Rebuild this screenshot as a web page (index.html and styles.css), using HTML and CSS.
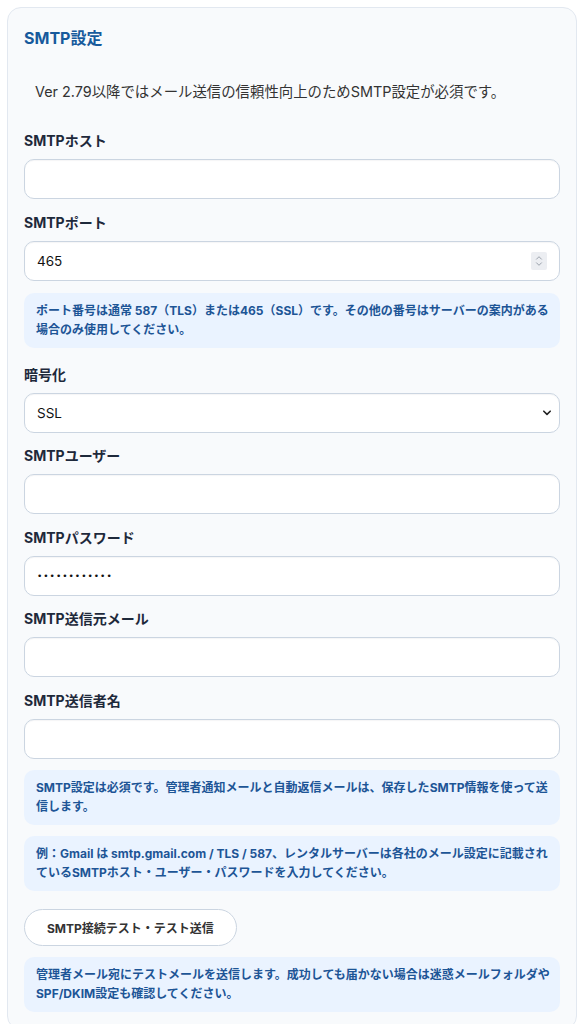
FILE: index.html
```html
<!DOCTYPE html>
<html lang="ja">
<head>
<meta charset="utf-8">
<title>SMTP設定</title>
<link rel="stylesheet" href="styles.css">
</head>
<body>
<section class="card">
  <h2 class="card-title">SMTP設定</h2>
  <p class="desc">Ver 2.79以降ではメール送信の信頼性向上のためSMTP設定が必須です。</p>

  <div class="field">
    <label class="label" for="host">SMTPホスト</label>
    <input class="input" id="host" type="text">
  </div>

  <div class="field field-note">
    <label class="label" for="port">SMTPポート</label>
    <div class="control">
      <input class="input" id="port" type="number" value="465">
      <span class="spin" aria-hidden="true">
        <svg width="10" height="14" viewBox="0 0 10 14"><path d="M2.5 5.2 L5 2.7 L7.5 5.2 M2.5 8.8 L5 11.3 L7.5 8.8" fill="none" stroke="#9aa1ab" stroke-width="1" stroke-linecap="round" stroke-linejoin="round"/></svg>
      </span>
    </div>
    <p class="note note-after">ポート番号は通常 587（TLS）または465（SSL）です。その他の番号はサーバーの案内がある場合のみ使用してください。</p>
  </div>

  <div class="field">
    <label class="label" for="enc">暗号化</label>
    <div class="control">
      <select class="input select" id="enc">
        <option>SSL</option>
        <option>TLS</option>
        <option>なし</option>
      </select>
      <span class="chev" aria-hidden="true">
        <svg width="10" height="8" viewBox="0 0 10 8"><path d="M1.8 2.2 L5 5.4 L8.2 2.2" fill="none" stroke="#222" stroke-width="1.6" stroke-linecap="round" stroke-linejoin="round"/></svg>
      </span>
    </div>
  </div>

  <div class="field">
    <label class="label" for="user">SMTPユーザー</label>
    <input class="input" id="user" type="text">
  </div>

  <div class="field">
    <label class="label" for="pass">SMTPパスワード</label>
    <input class="input pass" id="pass" type="password" value="123456789012">
  </div>

  <div class="field">
    <label class="label" for="from">SMTP送信元メール</label>
    <input class="input" id="from" type="text">
  </div>

  <div class="field field-last">
    <label class="label" for="name">SMTP送信者名</label>
    <input class="input" id="name" type="text">
  </div>

  <p class="note">SMTP設定は必須です。管理者通知メールと自動返信メールは、保存したSMTP情報を使って送信します。</p>
  <p class="note">例：Gmail は smtp.gmail.com / TLS / 587、レンタルサーバーは各社のメール設定に記載されているSMTPホスト・ユーザー・パスワードを入力してください。</p>

  <button class="btn" type="button">SMTP接続テスト・テスト送信</button>

  <p class="note">管理者メール宛にテストメールを送信します。成功しても届かない場合は迷惑メールフォルダやSPF/DKIM設定も確認してください。</p>
</section>
</body>
</html>
```

FILE: styles.css
```css
* { box-sizing: border-box; }

html, body {
  margin: 0;
  padding: 0;
  background: #ffffff;
}

body {
  font-family: "Inter", "Noto Sans CJK JP", sans-serif;
  color: #1e293b;
}

.card {
  margin: 7px 7px 0;
  padding: 16px 16px 6px;
  background: #f8fafc;
  border: 1px solid #e2e8f0;
  border-radius: 14px;
}

.card-title {
  margin: 0 0 18px;
  font-size: 16px;
  line-height: 28px;
  font-weight: 700;
  color: #175a9c;
}

.desc {
  margin: 0 0 18px;
  padding: 12px 11px;
  font-size: 14.4px;
  line-height: 20px;
  color: #333333;
}

.field {
  margin-bottom: 14.5px;
}

.field-note {
  margin-bottom: 18px;
}

.field-last {
  margin-bottom: 11px;
}

.label {
  display: block;
  margin-bottom: 9px;
  font-size: 14px;
  line-height: 18px;
  font-weight: 700;
  color: #1e293b;
}

.control {
  position: relative;
}

.input {
  display: block;
  width: 100%;
  height: 40px;
  margin: 0;
  padding: 0 12px;
  font-family: "Inter", "Noto Sans CJK JP", sans-serif;
  font-size: 13.5px;
  color: #111111;
  background: #ffffff;
  border: 1px solid #cbd5e1;
  border-radius: 10px;
  box-shadow: inset 0 1px 1px rgba(15, 23, 42, 0.04);
  outline: none;
}

.input[type="number"] {
  -moz-appearance: textfield;
}

.input[type="number"]::-webkit-inner-spin-button,
.input[type="number"]::-webkit-outer-spin-button {
  -webkit-appearance: none;
  margin: 0;
}

.pass {
  font-family: "DejaVu Sans", sans-serif;
  font-size: 9px;
  letter-spacing: 1px;
}

.select {
  -webkit-appearance: none;
  appearance: none;
}

.spin {
  position: absolute;
  right: 13px;
  top: 11px;
  width: 16px;
  height: 18px;
  display: flex;
  align-items: center;
  justify-content: center;
  background: #eceef2;
  border-radius: 2px;
  pointer-events: none;
}

.chev {
  position: absolute;
  right: 8px;
  top: 16px;
  display: flex;
  pointer-events: none;
}

.note {
  margin: 0 0 11px;
  padding: 8px 8px 8px 12px;
  font-size: 12px;
  line-height: 19.5px;
  font-weight: 700;
  color: #1d5596;
  background: #eaf3ff;
  border-radius: 10px;
}

.note-after {
  margin: 12px 0 0;
}

.btn {
  display: block;
  margin: 18px 0 11px;
  height: 37px;
  padding: 0 22px;
  font-family: "Inter", "Noto Sans CJK JP", sans-serif;
  font-size: 12px;
  font-weight: 700;
  color: #333333;
  background: #ffffff;
  border: 1px solid #cbd5e1;
  border-radius: 999px;
  cursor: pointer;
}
```
